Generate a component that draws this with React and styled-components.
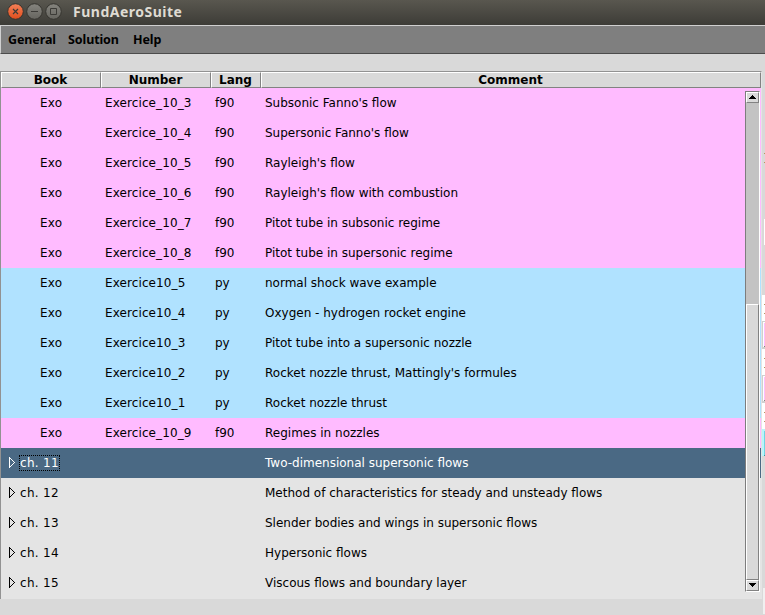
import React from "react";
import styled, { createGlobalStyle } from "styled-components";

const Global = createGlobalStyle`
  * { box-sizing: border-box; }
  body { margin: 0; background: #d9d9d9; overflow: hidden; }
`;

const Window = styled.div`
  width: 765px;
  height: 615px;
  background: #d9d9d9;
  color: #000;
  font: 12px/30px "DejaVu Sans", sans-serif;
  overflow: hidden;
  white-space: nowrap;
`;

const TitleBar = styled.header`
  height: 25px;
  display: flex;
  align-items: center;
  padding: 0 0 1px 7px;
  background: linear-gradient(#59574f, #3d3c37);
`;

const Controls = styled.svg`
  display: block;
  width: 56px;
  height: 18px;
`;

const Title = styled.h1`
  margin: 0 0 0 10px;
  font: bold 14px/24px "Noto Sans", sans-serif;
  letter-spacing: 0.5px;
  color: #dfdbd2;
`;

const MenuBar = styled.nav`
  height: 29px;
  display: flex;
  background: #7f7f7f;
  border-top: 1px solid #d0d0d0;
  border-left: 1px solid #d0d0d0;
  border-bottom: 1px solid #4c4c4c;
  padding-left: 7px;
`;

const MenuItem = styled.span`
  width: ${(p) => p.$width}px;
  font: bold 12.5px/27px "Noto Sans", sans-serif;
  letter-spacing: -0.1px;
`;

const Body = styled.main`
  display: flex;
  margin-top: 17px;
`;

const Tree = styled.section`
  width: 762px;
  height: 528px;
  border-top: 1px solid #929292;
  border-left: 1px solid #929292;
  border-right: 1px solid #e4e4e4;
  background: #e4e4e4;
`;

const Header = styled.div`
  display: grid;
  grid-template-columns: 100px 110px 50px 500px;
  height: 16px;
`;

const HeaderCell = styled.div`
  background: #d9d9d9;
  border: 1px solid;
  border-color: #fff #828282 #828282 #fff;
  font-weight: bold;
  line-height: 14px;
  padding-right: 1px;
  text-align: center;
`;

const Content = styled.div`
  display: flex;
  position: relative;
`;

const Rows = styled.div`
  width: 760px;
`;

const fills = { f90: "#ffbbff", py: "#b0e2ff", selected: "#4a6984", plain: "#e4e4e4" };

const Row = styled.div`
  display: grid;
  grid-template-columns: 104px 110px 50px 1fr;
  height: 30px;
  background: ${(p) => fills[p.$kind]};
  color: ${(p) => (p.$kind === "selected" ? "#fff" : "#000")};
`;

const Book = styled.span`
  padding-left: 39px;
  letter-spacing: 0.2px;
`;

const NumberCell = styled.span`
  letter-spacing: 0.1px;
`;

const Chapter = styled.span`
  display: flex;
  align-items: center;
  padding-left: 8px;
`;

const Arrow = styled.svg`
  width: 8px;
  height: 11px;
  margin: -1px 2px 0 0;
`;

const ChapterName = styled.span`
  line-height: 14px;
  height: 16px;
  width: 41px;
  letter-spacing: 0.3px;
  border: 1px dotted ${(p) => (p.$focused ? "#000" : "transparent")};
`;

const ScrollBar = styled.div`
  position: absolute;
  left: 744px;
  top: 3px;
  width: 15px;
  height: 501px;
  display: flex;
  flex-direction: column;
  border: 1px solid;
  border-color: #7d7d7d #fff #fff #7d7d7d;
  background: #c3c3c3;
`;

const ScrollPart = styled.div`
  flex: none;
  height: ${(p) => p.$height}px;
  margin-top: ${(p) => p.$gap || 0}px;
  background: #d9d9d9;
  border: 1px solid;
  border-color: #fff #828282 #828282 #fff;
`;

const ScrollIcon = styled.svg`
  display: block;
  width: 11px;
  height: 8px;
`;

const EdgeStrip = styled.svg`
  width: 3px;
  height: 543px;
`;

const exercises = [
  ["Exercice_10_3", "f90", "Subsonic Fanno's flow"],
  ["Exercice_10_4", "f90", "Supersonic Fanno's flow"],
  ["Exercice_10_5", "f90", "Rayleigh's flow"],
  ["Exercice_10_6", "f90", "Rayleigh's flow with combustion"],
  ["Exercice_10_7", "f90", "Pitot tube in subsonic regime"],
  ["Exercice_10_8", "f90", "Pitot tube in supersonic regime"],
  ["Exercice10_5", "py", "normal shock wave example"],
  ["Exercice10_4", "py", "Oxygen - hydrogen rocket engine"],
  ["Exercice10_3", "py", "Pitot tube into a supersonic nozzle"],
  ["Exercice10_2", "py", "Rocket nozzle thrust, Mattingly's formules"],
  ["Exercice10_1", "py", "Rocket nozzle thrust"],
  ["Exercice_10_9", "f90", "Regimes in nozzles"],
];

const chapters = [
  ["ch. 11", "Two-dimensional supersonic flows"],
  ["ch. 12", "Method of characteristics for steady and unsteady flows"],
  ["ch. 13", "Slender bodies and wings in supersonic flows"],
  ["ch. 14", "Hypersonic flows"],
  ["ch. 15", "Viscous flows and boundary layer"],
];

function WindowControls() {
  return (
    <Controls viewBox="0 0 56 18">
      <defs>
        <linearGradient id="close" x2="0" y2="1">
          <stop stopColor="#f58158" />
          <stop offset="1" stopColor="#e04d1c" />
        </linearGradient>
        <linearGradient id="grey" x2="0" y2="1">
          <stop stopColor="#85847e" />
          <stop offset="1" stopColor="#66655f" />
        </linearGradient>
      </defs>
      <g stroke="#35342f">
        <circle cx="8.5" cy="8.5" r="7.8" fill="url(#close)" />
        <circle cx="27.5" cy="8.5" r="7.8" fill="url(#grey)" />
        <circle cx="46.5" cy="8.5" r="7.8" fill="url(#grey)" />
      </g>
      <g stroke="#3c3b37" fill="none">
        <path d="M6 6l5 5M11 6l-5 5" strokeWidth="1.2" />
        <path d="M24 8.5h7" />
        <path d="M43.5 5.5h6v6h-6z" />
      </g>
    </Controls>
  );
}

export default function App() {
  return (
    <Window>
      <Global />
      <TitleBar>
        <WindowControls />
        <Title>FundAeroSuite</Title>
      </TitleBar>
      <MenuBar>
        <MenuItem $width={60}>General</MenuItem>
        <MenuItem $width={65}>Solution</MenuItem>
        <MenuItem $width={40}>Help</MenuItem>
      </MenuBar>
      <Body>
        <Tree>
          <Header>
            <HeaderCell>Book</HeaderCell>
            <HeaderCell>Number</HeaderCell>
            <HeaderCell>Lang</HeaderCell>
            <HeaderCell>Comment</HeaderCell>
          </Header>
          <Content>
            <Rows>
              {exercises.map(([number, lang, comment]) => (
                <Row key={number} $kind={lang}>
                  <Book>Exo</Book>
                  <NumberCell>{number}</NumberCell>
                  <span>{lang}</span>
                  <span>{comment}</span>
                </Row>
              ))}
              {chapters.map(([name, comment], i) => (
                <Row key={name} $kind={i === 0 ? "selected" : "plain"}>
                  <Chapter>
                    <Arrow viewBox="0 0 8 11">
                      <path d="M.5.5v10l5-5z" fill="none" stroke="currentColor" shapeRendering="crispEdges" />
                    </Arrow>
                    <ChapterName $focused={i === 0}>{name}</ChapterName>
                  </Chapter>
                  <span />
                  <span />
                  <span>{comment}</span>
                </Row>
              ))}
            </Rows>
            <ScrollBar>
              <ScrollPart $height={11}>
                <ScrollIcon viewBox="0 0 11 8" shapeRendering="crispEdges">
                  <path d="M5 2h1v1h1v1h1v1h1v1H2V5h1V4h1V3h1z" />
                </ScrollIcon>
              </ScrollPart>
              <ScrollPart $height={276} $gap={201} />
              <ScrollPart $height={11}>
                <ScrollIcon viewBox="0 0 11 8" shapeRendering="crispEdges">
                  <path d="M2 2h7v1H8v1H7v1H6v1H5V5H4V4H3V3H2z" />
                </ScrollIcon>
              </ScrollPart>
            </ScrollBar>
          </Content>
        </Tree>
        <EdgeStrip viewBox="0 71 3 543" shapeRendering="crispEdges">
          <path fill="#fff" d="M2 219h1v26H2zM0 295h3v134H0z" />
          <path fill="#d0d0d0" d="M0 321h3v28H0zM0 375h3v28H0z" />
          <path fill="#fff" d="M1 322h2v25H1zM1 376h2v25H1z" />
          <path fill="#ffbbff" d="M2 323h1v23H2zM2 377h1v23H2z" />
          <path fill="#828282" d="M2 346h1v1H2zM2 400h1v1H2z" />
          <path fill="#b8f4fa" d="M0 429h3v27H0z" />
          <path fill="#6fd5e3" d="M2 431h1v24H2z" />
          <path fill="#3c8f9b" d="M2 455h1v1H2z" />
          <path fill="#b89362" d="M2 153h1v1H2zM2 162h1v1H2zM2 304h1v1H2zM2 313h1v1H2zM2 358h1v1H2zM2 367h1v1H2zM2 412h1v1H2zM2 421h1v1H2z" />
          <path fill="#f0f0f0" d="M1 588h2v26H1z" />
        </EdgeStrip>
      </Body>
    </Window>
  );
}
